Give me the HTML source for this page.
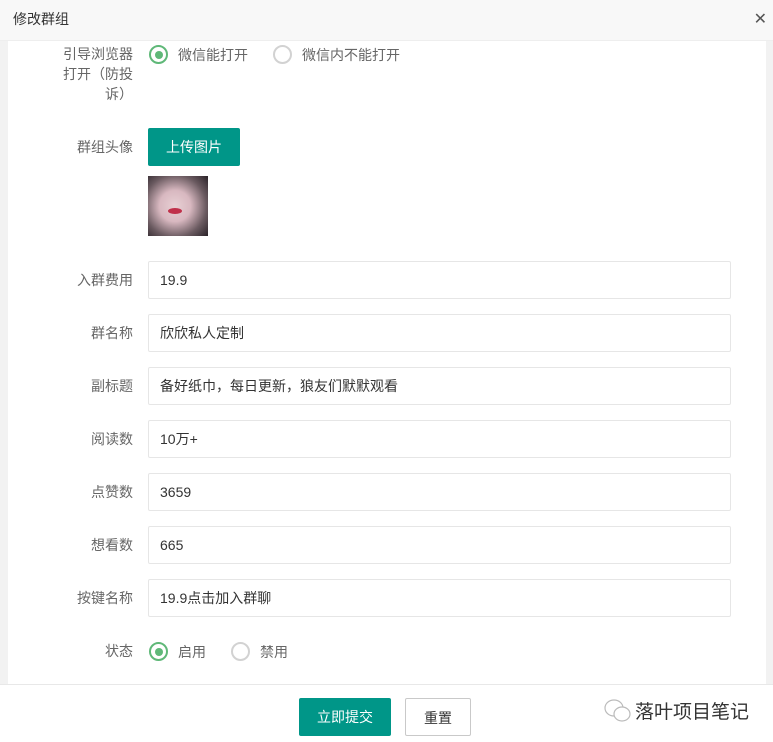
<!DOCTYPE html><html><head><meta charset="utf-8"><style>
*{box-sizing:border-box;margin:0;padding:0}
body{width:773px;height:742px;position:relative;background:#f2f2f2;font-family:"Liberation Sans","Noto Sans CJK SC",sans-serif;font-size:14px;color:#333;overflow:hidden}
.hd{position:absolute;left:0;top:0;width:773px;height:41px;background:#f8f8f8;border-bottom:1px solid #eee;line-height:39px;padding-left:13px;font-size:14px;color:#333}
.x{position:absolute;right:6px;top:0;font-size:16px;color:#555;font-weight:300}
.main{position:absolute;left:8px;top:41px;width:758px;height:643px;background:#fff}
.lb{position:absolute;right:640px;width:100px;text-align:right;color:#666;font-size:14px}
.in{position:absolute;left:148px;width:583px;height:38px;border:1px solid #e6e6e6;border-radius:2px;line-height:36px;padding-left:11px;color:#333;background:#fff}
.r{position:absolute;width:19px;height:19px;border-radius:50%;border:2px solid #d2d2d2}
.r.on{border-color:#5fb878}
.r.on:after{content:"";position:absolute;left:3.5px;top:3.5px;width:8px;height:8px;border-radius:50%;background:#5fb878}
.rt{position:absolute;color:#666}
.ft{position:absolute;left:0;top:684px;width:773px;height:58px;background:#fff;border-top:1px solid #e8e8e8}
.btn{position:absolute;height:38px;line-height:38px;text-align:center;border-radius:2px}
</style></head><body>
<div class="hd">修改群组<span class="x">✕</span></div>
<div class="main"></div>
<div class="lb" style="top:44px;line-height:20px">引导浏览器<br>打开（防投<br>诉）</div>
<div class="r on" style="left:149px;top:45px"></div><div class="rt" style="left:178px;top:45px">微信能打开</div>
<div class="r" style="left:273px;top:45px"></div><div class="rt" style="left:302px;top:45px">微信内不能打开</div>
<div class="lb" style="top:137px">群组头像</div>
<div class="btn" style="left:148px;top:128px;width:92px;background:#009688;color:#fff">上传图片</div>
<div style="position:absolute;left:148px;top:176px;width:60px;height:60px;background:radial-gradient(circle at 45% 50%,#e8d0d4 0,#d8b8c0 35%,#6a5a60 70%,#2a2228 100%)"><div style="position:absolute;left:20px;top:32px;width:14px;height:6px;border-radius:50%;background:#c0304a"></div></div>
<div class="lb" style="top:270px">入群费用</div><div class="in" style="top:261px">19.9</div>
<div class="lb" style="top:323px">群名称</div><div class="in" style="top:314px">欣欣私人定制</div>
<div class="lb" style="top:376px">副标题</div><div class="in" style="top:367px">备好纸巾，每日更新，狼友们默默观看</div>
<div class="lb" style="top:429px">阅读数</div><div class="in" style="top:420px">10万+</div>
<div class="lb" style="top:482px">点赞数</div><div class="in" style="top:473px">3659</div>
<div class="lb" style="top:535px">想看数</div><div class="in" style="top:526px">665</div>
<div class="lb" style="top:588px">按键名称</div><div class="in" style="top:579px">19.9点击加入群聊</div>
<div class="lb" style="top:641px">状态</div>
<div class="r on" style="left:149px;top:642px"></div><div class="rt" style="left:178px;top:642px">启用</div>
<div class="r" style="left:231px;top:642px"></div><div class="rt" style="left:260px;top:642px">禁用</div>
<div class="ft"></div>
<div class="btn" style="left:299px;top:698px;width:92px;background:#009688;color:#fff">立即提交</div>
<div class="btn" style="left:405px;top:698px;width:66px;border:1px solid #c9c9c9;background:#fff;color:#333">重置</div>
<svg style="position:absolute;left:603px;top:697px" width="30" height="28" viewBox="0 0 30 28"><ellipse cx="11" cy="11" rx="9" ry="8" fill="none" stroke="#bbb" stroke-width="1.2"/><ellipse cx="19" cy="17" rx="8" ry="7" fill="#fff" stroke="#bbb" stroke-width="1.2"/></svg>
<div style="position:absolute;left:635px;top:697px;font-size:19px;color:#333">落叶项目笔记</div>
</body></html>
